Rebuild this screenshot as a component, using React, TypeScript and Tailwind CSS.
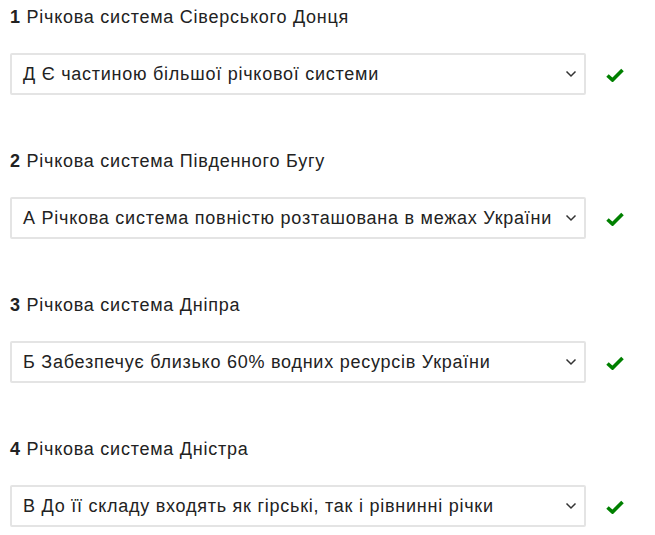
const items = [
  { n: 1, title: "Річкова система Сіверського Донця", answer: "Д Є частиною більшої річкової системи" },
  { n: 2, title: "Річкова система Південного Бугу", answer: "А Річкова система повністю розташована в межах України" },
  { n: 3, title: "Річкова система Дніпра", answer: "Б Забезпечує близько 60% водних ресурсів України" },
  { n: 4, title: "Річкова система Дністра", answer: "В До її складу входять як гірські, так і рівнинні річки" },
];

function Chevron() {
  return (
    <svg width="12" height="8" viewBox="0 0 12 8" className="shrink-0">
      <path d="M1.5 1.5 L6 6 L10.5 1.5" fill="none" stroke="#333" strokeWidth="1.5" />
    </svg>
  );
}

function Check() {
  return (
    <svg width="18" height="14" viewBox="0 0 18 14">
      <path d="M1.5 7.5 L6.5 12 L16.5 2" fill="none" stroke="#008000" strokeWidth="3.6" />
    </svg>
  );
}

export default function App() {
  return (
    <div className="bg-white pl-[10px] pt-[6px] text-[#222] font-['Liberation_Sans',Arial,sans-serif] text-[18px] tracking-[0.75px]">
      {items.map((it) => (
        <div key={it.n} className="h-[144px] last:h-auto">
          <div className="leading-[22px]">
            <span className="font-bold">{it.n}</span> {it.title}
          </div>
          <div className="mt-[25px] flex items-center">
            <div className="w-[576px] h-[42px] border-2 border-[#e4e4e4] rounded-[2px] flex items-center justify-between pl-[11px] pr-[7px]">
              <span className="whitespace-nowrap">{it.answer}</span>
              <Chevron />
            </div>
            <div className="ml-[20px] mt-[1px]">
              <Check />
            </div>
          </div>
        </div>
      ))}
    </div>
  );
}
